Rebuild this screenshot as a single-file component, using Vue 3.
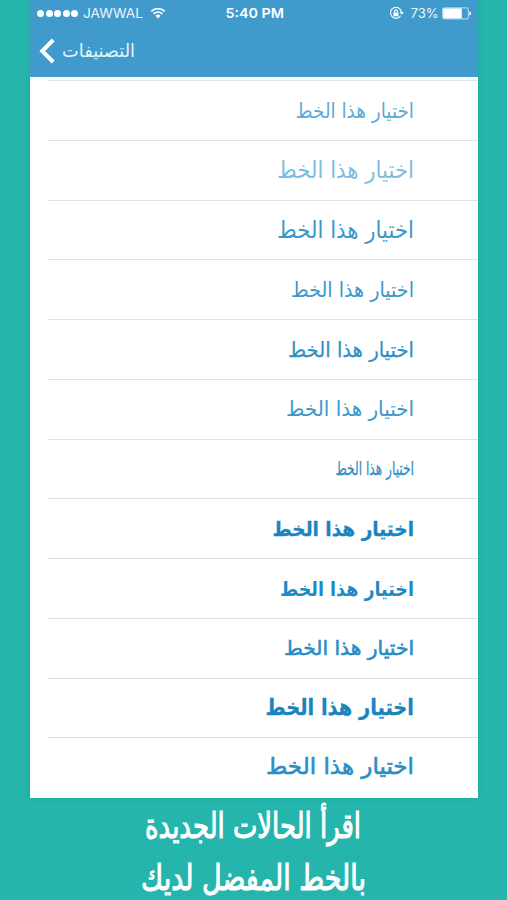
<script setup>
const label = 'اختيار هذا الخط'

const fonts = [
  { id: 1, width: 118.5, size: 20.5, y: 37, tone: 'light' },
  { id: 2, width: 137, size: 23.5, y: 36.5, tone: 'thin' },
  { id: 3, width: 137, size: 23.5, y: 36.5, tone: 'regular' },
  { id: 4, width: 123, size: 20.5, y: 37, tone: 'regular' },
  { id: 5, width: 126, size: 20.5, y: 37, tone: 'medium' },
  { id: 6, width: 128, size: 20.5, y: 36, tone: 'regular' },
  { id: 7, width: 78.5, size: 19, y: 35, tone: 'medium' },
  { id: 8, width: 141.5, size: 20, y: 36.5, tone: 'black' },
  { id: 9, width: 134, size: 20, y: 36.5, tone: 'bold' },
  { id: 10, width: 130, size: 20, y: 35.5, tone: 'semibold' },
  { id: 11, width: 148.5, size: 22.5, y: 35.5, tone: 'black' },
  { id: 12, width: 148, size: 22.5, y: 35.5, tone: 'semibold' }
]
</script>

<template>
  <div class="page">
    <div class="phone">
      <header class="header">
        <div class="status">
          <div class="carrier">
            <div class="dots">
              <i v-for="n in 5" :key="n"></i>
            </div>
            <svg class="carrier-name" width="61" height="18">
              <text x="-1" y="13.8" textLength="60" lengthAdjust="spacingAndGlyphs">JAWWAL</text>
            </svg>
            <svg class="wifi" width="16" height="12" viewBox="0 0 16 12">
              <path d="M1.3 4.4a9.6 9.6 0 0 1 13.4 0M3.6 6.8a6.3 6.3 0 0 1 8.8 0" />
              <path class="solid" d="M5.5 8.8a3.6 3.6 0 0 1 5 0L8 11.4z" />
            </svg>
          </div>
          <svg class="time" width="62" height="18">
            <text x="1.5" y="13.8" textLength="58.5" lengthAdjust="spacingAndGlyphs">5:40 PM</text>
          </svg>
          <div class="power">
            <svg class="lock" width="15" height="14" viewBox="0 0 15 14">
              <path d="M11.6 9.8A5.5 5.5 0 1 1 12.4 6" />
              <path class="solid" d="M10.6 6h4.2l-2.1 2.8zM4.4 6.4h5v3.8h-5z" />
              <path d="M5.4 6.6V5.4a1.5 1.5 0 0 1 3 0v1.2" />
            </svg>
            <svg class="percent" width="29" height="18">
              <text x="-0.5" y="13.8" textLength="28" lengthAdjust="spacingAndGlyphs">73%</text>
            </svg>
            <svg class="battery" width="30" height="13" viewBox="0 0 30 13">
              <rect class="case" x="0.7" y="0.9" width="25.6" height="11" rx="1.4" />
              <rect class="level" x="1.2" y="1.4" width="18.6" height="10" />
              <path class="solid" d="M27.4 4.2q1.7.7 1.7 2.2t-1.7 2.2z" />
            </svg>
          </div>
        </div>
        <nav class="back">
          <svg class="chevron" width="16" height="26" viewBox="0 0 16 26">
            <path d="M14.2 2 3.2 13l11 11" />
          </svg>
          <svg class="back-label" width="75" height="30">
            <text x="74" y="21" textLength="73" lengthAdjust="spacingAndGlyphs">التصنيفات</text>
          </svg>
        </nav>
      </header>

      <ul class="list">
        <li v-for="font in fonts" :key="font.id" class="row">
          <svg class="sample" :class="font.tone" width="160" height="58">
            <text
              x="160"
              :y="font.y"
              :font-size="font.size"
              :textLength="font.width"
              lengthAdjust="spacingAndGlyphs"
            >{{ label }}</text>
          </svg>
        </li>
      </ul>
    </div>

    <svg class="caption" width="260" height="102">
      <text x="251" y="40" textLength="216" lengthAdjust="spacingAndGlyphs">اقرأ الحالات الجديدة</text>
      <text x="256" y="92" textLength="225" lengthAdjust="spacingAndGlyphs">بالخط المفضل لديك</text>
    </svg>
  </div>
</template>

<style>
body {
  background: #25b5ac;
}
</style>

<style scoped>
.page {
  height: 900px;
  overflow: hidden;
  background: #25b5ac;
  font-family: "DejaVu Sans", sans-serif;
}

.phone {
  box-sizing: border-box;
  width: 448px;
  height: 797.5px;
  margin-left: 30px;
  background: #fff;
  overflow: hidden;
  box-shadow: 0 0 5px rgba(20, 110, 120, 0.2);
}

svg {
  display: block;
  flex-shrink: 0;
  overflow: visible;
}

.header {
  box-sizing: border-box;
  height: 77px;
  background: #409bcc;
  color: #fff;
}

.status {
  display: grid;
  grid-template-columns: 1fr 62px 1fr;
  align-items: center;
  height: 26px;
  padding: 0 6px 0 7px;
}

.status text {
  font-family: Inter, sans-serif;
  font-size: 13.3px;
  fill: #e9f6fc;
}

.status .time text {
  font-weight: 600;
  fill: #fff;
}

.carrier,
.power {
  display: flex;
  align-items: center;
}

.power {
  justify-content: flex-end;
}

.dots {
  display: flex;
  gap: 1.6px;
  margin-right: 6px;
}

.dots i {
  width: 7px;
  height: 7px;
  border-radius: 50%;
  background: #fff;
}

.wifi {
  margin-left: 5px;
}

.wifi path,
.lock path {
  fill: none;
  stroke: #fff;
  stroke-width: 1.7;
}

.lock path {
  stroke-width: 1.1;
}

.status path.solid {
  fill: #fff;
  stroke: none;
}

.lock {
  margin-right: 7px;
}

.percent {
  margin-right: 2px;
}

.case {
  fill: none;
  stroke: #c3e3f3;
  stroke-width: 1;
}

.level {
  fill: #fff;
}

.back {
  display: flex;
  align-items: center;
  height: 50px;
  padding-left: 9px;
}

.chevron path {
  fill: none;
  stroke: #fff;
  stroke-width: 4;
}

.back-label {
  margin-left: 6px;
}

.back-label text {
  direction: rtl;
  font-size: 18px;
  fill: #e4f3fb;
}

.list {
  margin: 3px 0 0 18px;
  padding: 0;
  list-style: none;
  border-top: 1px solid #e3e5e7;
}

.row {
  box-sizing: border-box;
  display: flex;
  justify-content: flex-end;
  height: 59.75px;
  padding-right: 64.5px;
  border-bottom: 1px solid #dfe1e4;
}

.row:last-child {
  border-bottom: none;
}

.sample text {
  direction: rtl;
  fill: #3b98cb;
}

.sample.thin text {
  fill: #7fbde0;
}

.sample.light text {
  fill: #5caad6;
}

.sample.medium text {
  fill: #2f90c6;
  stroke: #2f90c6;
  stroke-width: 0.25;
}

.sample.semibold text {
  fill: #2a8dc4;
  stroke: #2a8dc4;
  stroke-width: 0.6;
}

.sample.bold text {
  fill: #218ac3;
  font-weight: bold;
}

.sample.black text {
  fill: #1b84be;
  stroke: #1b84be;
  stroke-width: 0.3;
  font-weight: bold;
}

.caption {
  margin: 0 auto 0 110px;
}

.caption text {
  direction: rtl;
  font-size: 35px;
  fill: #fff;
  stroke: #fff;
  stroke-width: 1.1;
}
</style>
